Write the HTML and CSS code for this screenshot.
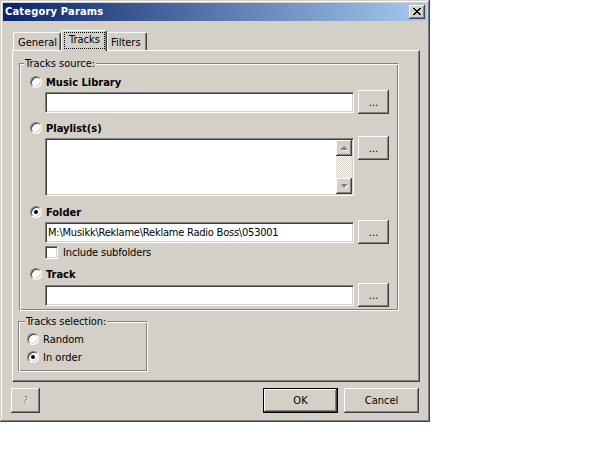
FILE: index.html
```html
<!DOCTYPE html>
<html>
<head>
<meta charset="utf-8">
<title>Category Params</title>
<link rel="stylesheet" href="styles.css">
</head>
<body>
<div class="dialog">
  <div class="titlebar">
    <span class="title">Category Params</span>
    <span class="close raised">
      <svg width="16" height="14" viewBox="0 0 16 14"><path fill="#000" d="M4 3h2v1H4zM10 3h2v1h-2zM5 4h2v1H5zM9 4h2v1H9zM6 5h4v1H6zM7 6h2v1H7zM6 7h4v1H6zM5 8h2v1H5zM9 8h2v1H9zM4 9h2v1H4zM10 9h2v1h-2z"/></svg>
    </span>
  </div>

  <div class="tabs">
    <div class="tab tab-general">General</div>
    <div class="tab tab-active"><span class="focus">Tracks</span></div>
    <div class="tab tab-filters">Filters</div>
  </div>

  <div class="panel">
    <div class="group group-source">
      <div class="legend">Tracks source:</div>

      <div class="opt"><span class="radio"></span><span class="bold">Music Library</span></div>
      <div class="field-row"><div class="edit sunken"></div><div class="btn dots raised">...</div></div>

      <div class="opt opt-playlist"><span class="radio"></span><span class="bold">Playlist(s)</span></div>
      <div class="memo-row">
        <div class="memo sunken">
          <div class="memo-body"></div>
          <div class="vscroll">
            <div class="sb-btn raised"><svg width="7" height="5" viewBox="0 0 7 5"><path fill="#fff" d="M4 1l3 3v1H1v-1z"/><path fill="#808080" d="M3 0l3 3v1H0v-1z"/></svg></div>
            <div class="sb-track"></div>
            <div class="sb-btn raised"><svg width="7" height="5" viewBox="0 0 7 5"><path fill="#fff" d="M1 1h6v1l-3 3z"/><path fill="#808080" d="M0 0h6v1l-3 3z"/></svg></div>
          </div>
        </div>
        <div class="btn dots raised">...</div>
      </div>

      <div class="opt opt-folder"><span class="radio on"></span><span class="bold">Folder</span></div>
      <div class="field-row"><div class="edit edit-path sunken">M:\Musikk\Reklame\Reklame Radio Boss\053001</div><div class="btn dots raised">...</div></div>
      <div class="check-row"><span class="checkbox sunken"></span><span class="check-label">Include subfolders</span></div>

      <div class="opt opt-track"><span class="radio"></span><span class="bold">Track</span></div>
      <div class="field-row field-track"><div class="edit sunken"></div><div class="btn dots raised">...</div></div>
    </div>

    <div class="group group-sel">
      <div class="legend legend-sel">Tracks selection:</div>
      <div class="opt opt-random"><span class="radio"></span><span>Random</span></div>
      <div class="opt opt-order"><span class="radio on"></span><span>In order</span></div>
    </div>
  </div>

  <div class="footer">
    <div class="btn help raised">?</div>
    <div class="btn ok raised">OK</div>
    <div class="btn cancel raised">Cancel</div>
  </div>
</div>
</body>
</html>
```

FILE: styles.css
```css
* { box-sizing: border-box; }
html, body { margin: 0; padding: 0; background: #fff; }
body {
  font-family: "DejaVu Sans Condensed", "Liberation Sans", sans-serif;
  font-size: 11px;
  line-height: 13px;
  color: #000;
}

.dialog {
  width: 430px;
  height: 422px;
  padding: 3px;
  background: #d4d0c8;
  display: flex;
  flex-direction: column;
  box-shadow: inset -1px -1px 0 #404040, inset 1px 1px 0 #d4d0c8,
              inset -2px -2px 0 #808080, inset 2px 2px 0 #fff;
}

.raised {
  background: #d4d0c8;
  box-shadow: inset -1px -1px 0 #404040, inset 1px 1px 0 #fff,
              inset -2px -2px 0 #808080, inset 2px 2px 0 #d4d0c8;
}
.sunken {
  background: #fff;
  border: 1px solid;
  border-color: #808080 #fff #fff #808080;
  box-shadow: inset 1px 1px 0 #404040, inset -1px -1px 0 #d4d0c8;
}

/* title bar */
.titlebar {
  flex: none;
  height: 18px;
  padding: 0 2px;
  display: flex;
  align-items: center;
  background: linear-gradient(to right, #0a246a, #a6caf0);
  color: #fff;
  font-weight: bold;
}
.title { line-height: 18px; letter-spacing: 0.2px; }
.close { margin-left: auto; width: 16px; height: 14px; display: block; }
.close svg { display: block; }

/* tabs */
.tabs {
  flex: none;
  height: 20px;
  margin-top: 9px;
  padding-left: 10px;
  display: flex;
  align-items: flex-end;
}
.tab {
  height: 18px;
  background: #d4d0c8;
  border-top: 1px solid #fff;
  border-left: 1px solid #fff;
  border-right: 1px solid #404040;
  border-top-left-radius: 2px;
  border-top-right-radius: 2px;
  box-shadow: inset -1px 0 0 #808080;
  padding: 3px 0 0 4px;
  white-space: nowrap;
}
.tab-general { width: 48px; }
.tab-filters { width: 40px; padding-left: 3px; }
.tab-active {
  width: 46px;
  height: 21px;
  margin-bottom: -1px;
  padding: 1px 0 0 2px;
  position: relative;
  z-index: 1;
}
.focus {
  display: block;
  width: 41px;
  height: 17px;
  border: 1px dotted #000;
  text-align: center;
}

/* panel */
.panel {
  flex: none;
  margin-left: 9px;
  width: 408px;
  height: 332px;
  border: 1px solid;
  border-color: #fff #404040 #404040 #fff;
  box-shadow: inset -1px -1px 0 #808080;
}

.group {
  display: flex;
  flex-direction: column;
  border: 1px solid;
  border-color: #808080 #fff #fff #808080;
  box-shadow: inset 1px 1px 0 #fff, inset -1px -1px 0 #808080;
}
.group-source {
  margin: 12px 0 0 6px;
  width: 380px;
  padding: 0 9px 3px 10px;
}
.group-sel {
  margin: 10px 0 0 5px;
  width: 130px;
  padding: 0 0 7px 8px;
}
.legend {
  align-self: flex-start;
  height: 13px;
  margin: -7px 0 0 -6px;
  padding: 0 1px;
  background: #d4d0c8;
  white-space: nowrap;
}
.legend-sel { margin-left: -2px; letter-spacing: -0.1px; }

.opt {
  height: 14px;
  margin-top: 5px;
  display: flex;
  align-items: center;
  white-space: nowrap;
}
.opt-playlist { margin-top: 7px; }
.opt-folder { margin-top: 9px; }
.opt-track { margin-top: 8px; }
.opt-random { margin-top: 4px; }
.opt-order { margin-top: 4px; }
.bold { font-weight: bold; }

.radio {
  flex: none;
  width: 12px;
  height: 12px;
  margin-right: 4px;
  border-radius: 50%;
  background: #fff;
  border: 1px solid;
  border-color: #808080 #fff #fff #808080;
  box-shadow: inset 1px 1px 0 #404040, inset -1px -1px 0 #d4d0c8;
  display: flex;
  align-items: center;
  justify-content: center;
}
.radio.on::after {
  content: "";
  width: 4px;
  height: 4px;
  border-radius: 50%;
  background: #000;
}

.field-row {
  height: 24px;
  margin: 1px 0 0 15px;
  display: flex;
  align-items: center;
  gap: 4px;
}
.field-track { margin-top: 2px; }
.edit {
  flex: 1;
  height: 21px;
  padding: 0 2px;
  display: flex;
  align-items: center;
  white-space: nowrap;
  overflow: hidden;
}
.edit-path { letter-spacing: -0.22px; }

.btn {
  display: flex;
  align-items: center;
  justify-content: center;
  white-space: nowrap;
}
.dots { flex: none; width: 31px; height: 24px; }

.memo-row {
  margin: 1px 0 0 15px;
  display: flex;
  align-items: flex-start;
  gap: 4px;
}
.memo {
  flex: 1;
  height: 58px;
  margin-top: 2px;
  padding: 1px;
  display: flex;
}
.memo-body { flex: 1; }
.vscroll {
  width: 16px;
  display: flex;
  flex-direction: column;
}
.sb-btn {
  height: 16px;
  flex: none;
  display: flex;
  align-items: center;
  justify-content: center;
}
.sb-btn svg { display: block; }
.sb-track {
  flex: 1;
  background: repeating-conic-gradient(#fff 0 25%, #d4d0c8 0 50%) 0 0 / 2px 2px;
}

.check-row {
  height: 14px;
  margin: 1px 0 0 15px;
  display: flex;
  align-items: center;
  white-space: nowrap;
}
.check-label { letter-spacing: -0.15px; }
.checkbox {
  flex: none;
  width: 13px;
  height: 13px;
  margin-right: 5px;
}

/* footer */
.footer {
  flex: none;
  margin-top: 6px;
  padding: 0 8px;
  display: flex;
}
.footer .btn { height: 25px; }
.help {
  width: 29px;
  color: #808080;
  text-shadow: 1px 1px 0 #fff;
}
.ok {
  width: 75px;
  margin-left: auto;
  border: 1px solid #000;
}
.cancel { width: 75px; margin-left: 6px; }
```
